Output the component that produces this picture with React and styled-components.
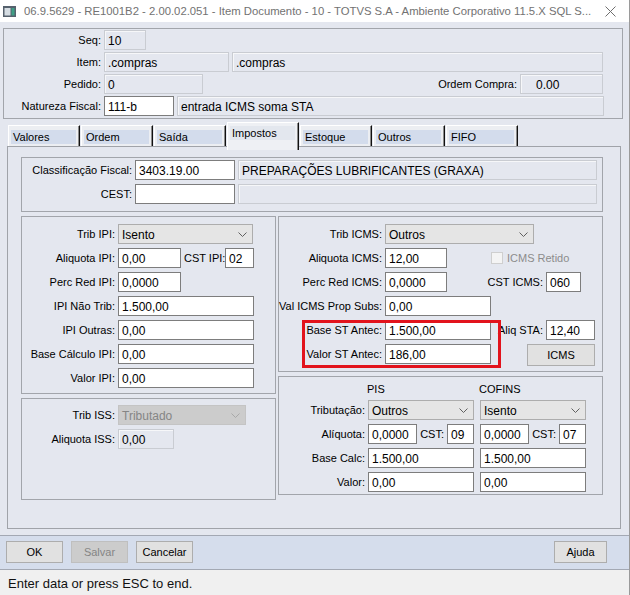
import React from 'react'
import styled, { createGlobalStyle } from 'styled-components'

const font = `"Liberation Sans", Arial, sans-serif`

const GlobalStyle = createGlobalStyle`
  html, body {
    margin: 0;
    padding: 0;
    background: #ffffff;
  }
  body {
    font-family: ${font};
    font-size: 11px;
    color: #000;
  }
`

const App = () => {
  return (
    <>
      <GlobalStyle />
      <Window>
        <TitleBar>
          <AppIcon />
          <TitleText>
            06.9.5629 - RE1001B2 - 2.00.02.051 - Item Documento - 10 - TOTVS S.A - Ambiente Corporativo 11.5.X SQL S...
          </TitleText>
          <CloseIcon />
        </TitleBar>

        <Body>
          <Group $pad="1px 19px 2px 0" $gap={2}>
            <Row>
              <Label $w={97}>Seq:</Label>
              <Field $w={42} $kind="ro">10</Field>
            </Row>
            <Row>
              <Label $w={97}>Item:</Label>
              <Field $w={125} $kind="ro">.compras</Field>
              <Field $w={371} $kind="ro">.compras</Field>
            </Row>
            <Row>
              <Label $w={97}>Pedido:</Label>
              <Field $w={99} $kind="ro">0</Field>
              <Label $grow>Ordem Compra:</Label>
              <Field $w={83} $kind="ro" $indent={15}>0.00</Field>
            </Row>
            <Row>
              <Label $w={97}>Natureza Fiscal:</Label>
              <Field $w={70}>111-b</Field>
              <Field $w={427} $kind="ro">entrada ICMS soma STA</Field>
            </Row>
          </Group>

          <TabArea>
            <TabStrip>
              {['Valores', 'Ordem', 'Saída', 'Impostos', 'Estoque', 'Outros', 'FIFO'].map(t => (
                <Tab key={t} $active={t === 'Impostos'}>
                  <TabLabel $active={t === 'Impostos'}>{t}</TabLabel>
                </Tab>
              ))}
            </TabStrip>

            <TabPanel>
              <Group $pad="2px 5px 7px 0" $gap={4}>
                <Row>
                  <Label $w={110}>Classificação Fiscal:</Label>
                  <Field $w={100}>3403.19.00</Field>
                  <Field $grow $kind="ro">PREPARAÇÕES LUBRIFICANTES (GRAXA)</Field>
                </Row>
                <Row>
                  <Label $w={110}>CEST:</Label>
                  <Field $w={100}></Field>
                  <Field $grow $kind="ro"></Field>
                </Row>
              </Group>

              <Columns>
                <Column $w={255}>
                  <Group $pad="7px 0 0 0" $gap={4} $h={178}>
                    <Row>
                      <Label $w={93}>Trib IPI:</Label>
                      <Select $w={135} value="Isento" />
                    </Row>
                    <Row>
                      <Label $w={93}>Aliquota IPI:</Label>
                      <Field $w={63}>0,00</Field>
                      <Label $w={38}>CST IPI:</Label>
                      <Field $w={29}>02</Field>
                    </Row>
                    <Row>
                      <Label $w={93}>Perc Red IPI:</Label>
                      <Field $w={63}>0,0000</Field>
                    </Row>
                    <Row>
                      <Label $w={93}>IPI Não Trib:</Label>
                      <Field $w={136}>1.500,00</Field>
                    </Row>
                    <Row>
                      <Label $w={93}>IPI Outras:</Label>
                      <Field $w={136}>0,00</Field>
                    </Row>
                    <Row>
                      <Label $w={93}>Base Cálculo IPI:</Label>
                      <Field $w={136}>0,00</Field>
                    </Row>
                    <Row>
                      <Label $w={93}>Valor IPI:</Label>
                      <Field $w={136}>0,00</Field>
                    </Row>
                  </Group>

                  <Group $pad="6px 0 0 0" $gap={4} $h={102}>
                    <Row>
                      <Label $w={93}>Trib ISS:</Label>
                      <Select $w={128} value="Tributado" disabled />
                    </Row>
                    <Row>
                      <Label $w={93}>Aliquota ISS:</Label>
                      <Field $w={56} $kind="ro">0,00</Field>
                    </Row>
                  </Group>
                </Column>

                <Column $w={325}>
                  <Group $pad="7px 0 0 0" $gap={4} $h={156}>
                    <Row>
                      <Label $w={103}>Trib ICMS:</Label>
                      <Select $w={149} value="Outros" />
                    </Row>
                    <Row>
                      <Label $w={103}>Aliquota ICMS:</Label>
                      <Field $w={62}>12,00</Field>
                      <CheckBox />
                      <CheckText>ICMS Retido</CheckText>
                    </Row>
                    <Row>
                      <Label $w={103}>Perc Red ICMS:</Label>
                      <Field $w={62}>0,0000</Field>
                      <Label $w={93}>CST ICMS:</Label>
                      <Field $w={35}>060</Field>
                    </Row>
                    <Row>
                      <Label $w={103}>Val ICMS Prop Subs:</Label>
                      <Field $w={106}>0,00</Field>
                    </Row>
                    <Row>
                      <Label $w={103}>Base ST Antec:</Label>
                      <Field $w={106}>1.500,00</Field>
                      <Label $w={49}>Aliq STA:</Label>
                      <Field $w={49}>12,40</Field>
                    </Row>
                    <Row>
                      <Label $w={103}>Valor ST Antec:</Label>
                      <Field $w={106}>186,00</Field>
                      <SideButton>ICMS</SideButton>
                    </Row>
                    <Highlight />
                  </Group>

                  <Group $pad="5px 0 0 0" $gap={4} $h={119}>
                    <PisHead>
                      <HeadCell>PIS</HeadCell>
                      <HeadCell>COFINS</HeadCell>
                    </PisHead>
                    <Row>
                      <Label $w={86}>Tributação:</Label>
                      <Cells>
                        <Select $w={106} value="Outros" />
                        <Select $w={106} value="Isento" />
                      </Cells>
                    </Row>
                    <Row>
                      <Label $w={86}>Alíquota:</Label>
                      <Cells>
                        <Cell>
                          <Field $w={49}>0,0000</Field>
                          <Label $w={24}>CST:</Label>
                          <Field $w={27}>09</Field>
                        </Cell>
                        <Cell>
                          <Field $w={49}>0,0000</Field>
                          <Label $w={24}>CST:</Label>
                          <Field $w={27}>07</Field>
                        </Cell>
                      </Cells>
                    </Row>
                    <Row>
                      <Label $w={86}>Base Calc:</Label>
                      <Cells>
                        <Field $w={106}>1.500,00</Field>
                        <Field $w={106}>1.500,00</Field>
                      </Cells>
                    </Row>
                    <Row>
                      <Label $w={86}>Valor:</Label>
                      <Cells>
                        <Field $w={106}>0,00</Field>
                        <Field $w={106}>0,00</Field>
                      </Cells>
                    </Row>
                  </Group>
                </Column>
              </Columns>
            </TabPanel>
          </TabArea>
        </Body>

        <ButtonBar>
          <Button $w={57}>OK</Button>
          <Button $w={57} disabled>Salvar</Button>
          <Button $w={57}>Cancelar</Button>
          <Button $w={53} $right>Ajuda</Button>
        </ButtonBar>

        <StatusBar>Enter data or press ESC to end.</StatusBar>
      </Window>
    </>
  )
}

export default App

const AppIcon = () => (
  <svg width="13" height="11" viewBox="0 0 13 11">
    <rect x="0" y="0" width="13" height="11" fill="#56616d" />
    <rect x="1.5" y="2" width="6" height="7.5" fill="#d6dde3" />
    <rect x="8.5" y="2" width="3" height="7.5" fill="#3f9f86" />
  </svg>
)

const CloseIcon = () => (
  <CloseWrap>
    <svg width="11" height="11" viewBox="0 0 11 11">
      <path d="M0.5 0.5 L10.5 10.5 M10.5 0.5 L0.5 10.5" stroke="#6f6f6f" strokeWidth="1" fill="none" />
    </svg>
  </CloseWrap>
)

const Select = ({ $w, value, disabled }) => (
  <SelectBox $w={$w} $disabled={disabled}>
    <span>{value}</span>
    <svg width="9" height="5" viewBox="0 0 9 5">
      <polyline points="0.5,0.5 4.5,4.5 8.5,0.5" fill="none" stroke={disabled ? '#a9a9a9' : '#606060'} strokeWidth="1" />
    </svg>
  </SelectBox>
)

const Window = styled.div`
  width: 630px;
  height: 595px;
  display: flex;
  flex-direction: column;
  box-sizing: border-box;
  border-right: 1px solid #9a9a9a;
  overflow: hidden;
`

const TitleBar = styled.div`
  height: 22px;
  flex-shrink: 0;
  display: flex;
  align-items: center;
  gap: 8px;
  padding-left: 3px;
  background: #ffffff;
`

const TitleText = styled.div`
  flex: 1;
  white-space: nowrap;
  overflow: hidden;
  font-size: 11.3px;
  color: #727272;
`

const CloseWrap = styled.div`
  width: 30px;
  display: flex;
  justify-content: flex-start;
  padding-left: 6px;
  box-sizing: border-box;
`

const Body = styled.div`
  height: 513px;
  flex-shrink: 0;
  box-sizing: border-box;
  padding: 6px 6px 0 3px;
  background: #e4e7ef;
`

const Group = styled.div`
  position: relative;
  box-sizing: border-box;
  border: 1px solid #a2a5ab;
  display: flex;
  flex-direction: column;
  gap: ${p => p.$gap}px;
  padding: ${p => p.$pad};
  height: ${p => (p.$h ? `${p.$h}px` : 'auto')};
`

const Row = styled.div`
  display: flex;
  align-items: center;
  gap: 3px;
  height: 20px;
`

const Label = styled.div`
  width: ${p => (p.$w ? `${p.$w}px` : 'auto')};
  flex: ${p => (p.$grow ? 1 : '0 0 auto')};
  text-align: right;
  white-space: nowrap;
  font-size: 11px;
  color: #000;
`

const Field = styled.div`
  width: ${p => (p.$w ? `${p.$w}px` : 'auto')};
  flex: ${p => (p.$grow ? 1 : '0 0 auto')};
  height: 20px;
  box-sizing: border-box;
  display: flex;
  align-items: center;
  padding: 1px 3px 0 ${p => p.$indent ?? 3}px;
  font-size: 12px;
  white-space: nowrap;
  overflow: hidden;
  background: ${p => (p.$kind === 'ro' ? '#e4e7ef' : '#ffffff')};
  border: 1px solid ${p => (p.$kind === 'ro' ? '#c9ccd2' : '#7d7d7d')};
  box-shadow: ${p => (p.$kind === 'ro' ? 'inset 1px 1px 0 #f6f7f9' : 'none')};
`

const SelectBox = styled.div`
  width: ${p => p.$w}px;
  flex-shrink: 0;
  height: 20px;
  box-sizing: border-box;
  display: flex;
  align-items: center;
  justify-content: space-between;
  padding: 1px 5px 0 3px;
  font-size: 12px;
  background: ${p => (p.$disabled ? '#cccccc' : '#e5e5e5')};
  border: 1px solid ${p => (p.$disabled ? '#c4c4c4' : '#adadad')};
  color: ${p => (p.$disabled ? '#858585' : '#000')};
`

const CheckBox = styled.div`
  width: 12px;
  height: 12px;
  box-sizing: border-box;
  margin-left: 41px;
  background: #f4f4f4;
  border: 1px solid #cfcfcf;
  flex-shrink: 0;
`

const CheckText = styled.span`
  font-size: 11px;
  color: #8c8c8c;
  margin-left: 1px;
`

const SideButton = styled.div`
  width: 68px;
  height: 22px;
  margin-left: 33px;
  margin-top: 2px;
  box-sizing: border-box;
  display: flex;
  align-items: center;
  justify-content: center;
  font-size: 11px;
  background: #e1e1e1;
  border: 1px solid #adadad;
`

const Highlight = styled.div`
  position: absolute;
  left: 23px;
  top: 103px;
  width: 199px;
  height: 48px;
  box-sizing: border-box;
  border: 3px solid #e2131c;
  pointer-events: none;
`

const PisHead = styled.div`
  display: flex;
  height: 14px;
  align-items: center;
  padding-left: 88px;
  gap: 6px;
`

const HeadCell = styled.div`
  width: 106px;
  font-size: 11px;
`

const Cells = styled.div`
  display: flex;
  gap: 6px;
`

const Cell = styled.div`
  width: 106px;
  display: flex;
  align-items: center;
  gap: 3px;
`

const TabArea = styled.div`
  margin: 3px 2px 0 4px;
`

const TabStrip = styled.div`
  height: 24px;
  display: flex;
  align-items: flex-end;
  gap: 1px;
  padding-left: 1px;
`

const Tab = styled.div`
  position: relative;
  z-index: 2;
  width: 72px;
  height: ${p => (p.$active ? 28 : 21)}px;
  margin-bottom: ${p => (p.$active ? -4 : 0)}px;
  box-sizing: border-box;
  background: ${p => (p.$active ? '#eef0f4' : '#eceef2')};
  border-top: 1px solid #ffffff;
  border-left: 1px solid #ffffff;
  border-right: 1px solid #111111;
  box-shadow: inset -1px 0 0 #8a8a8a;
  padding: ${p => (p.$active ? '3px 3px 0 2px' : '4px 3px 0 2px')};
`

const TabLabel = styled.div`
  height: 14px;
  line-height: 14px;
  padding-left: 2px;
  font-size: 11px;
  background: ${p => (p.$active ? '#e3e7ee' : '#d3dcec')};
`

const TabPanel = styled.div`
  height: 383px;
  box-sizing: border-box;
  border: 1px solid #a0a3a9;
  padding: 10px 17px 0 13px;
  display: flex;
  flex-direction: column;
  gap: 4px;
`

const Columns = styled.div`
  display: flex;
  gap: 2px;
`

const Column = styled.div`
  width: ${p => p.$w}px;
  display: flex;
  flex-direction: column;
  gap: 4px;
`

const ButtonBar = styled.div`
  height: 35px;
  flex-shrink: 0;
  box-sizing: border-box;
  display: flex;
  align-items: flex-start;
  gap: 8px;
  padding: 5px 22px 0 6px;
  background: #d5ddec;
  border-top: 1px solid #a3a8b3;
  border-bottom: 1px solid #a3a8b3;
`

const Button = styled.div`
  width: ${p => p.$w}px;
  height: 22px;
  margin-left: ${p => (p.$right ? 'auto' : 0)};
  box-sizing: border-box;
  display: flex;
  align-items: center;
  justify-content: center;
  font-size: 11px;
  background: ${p => (p.disabled ? '#cccccc' : '#e1e1e1')};
  border: 1px solid ${p => (p.disabled ? '#bfbfbf' : '#adadad')};
  color: ${p => (p.disabled ? '#858585' : '#000')};
`

const StatusBar = styled.div`
  flex: 1;
  display: flex;
  align-items: center;
  padding: 2px 0 0 8px;
  background: #f0f0f0;
  font-family: "Liberation Sans Narrow", ${font};
  font-size: 13px;
  color: #111;
`
